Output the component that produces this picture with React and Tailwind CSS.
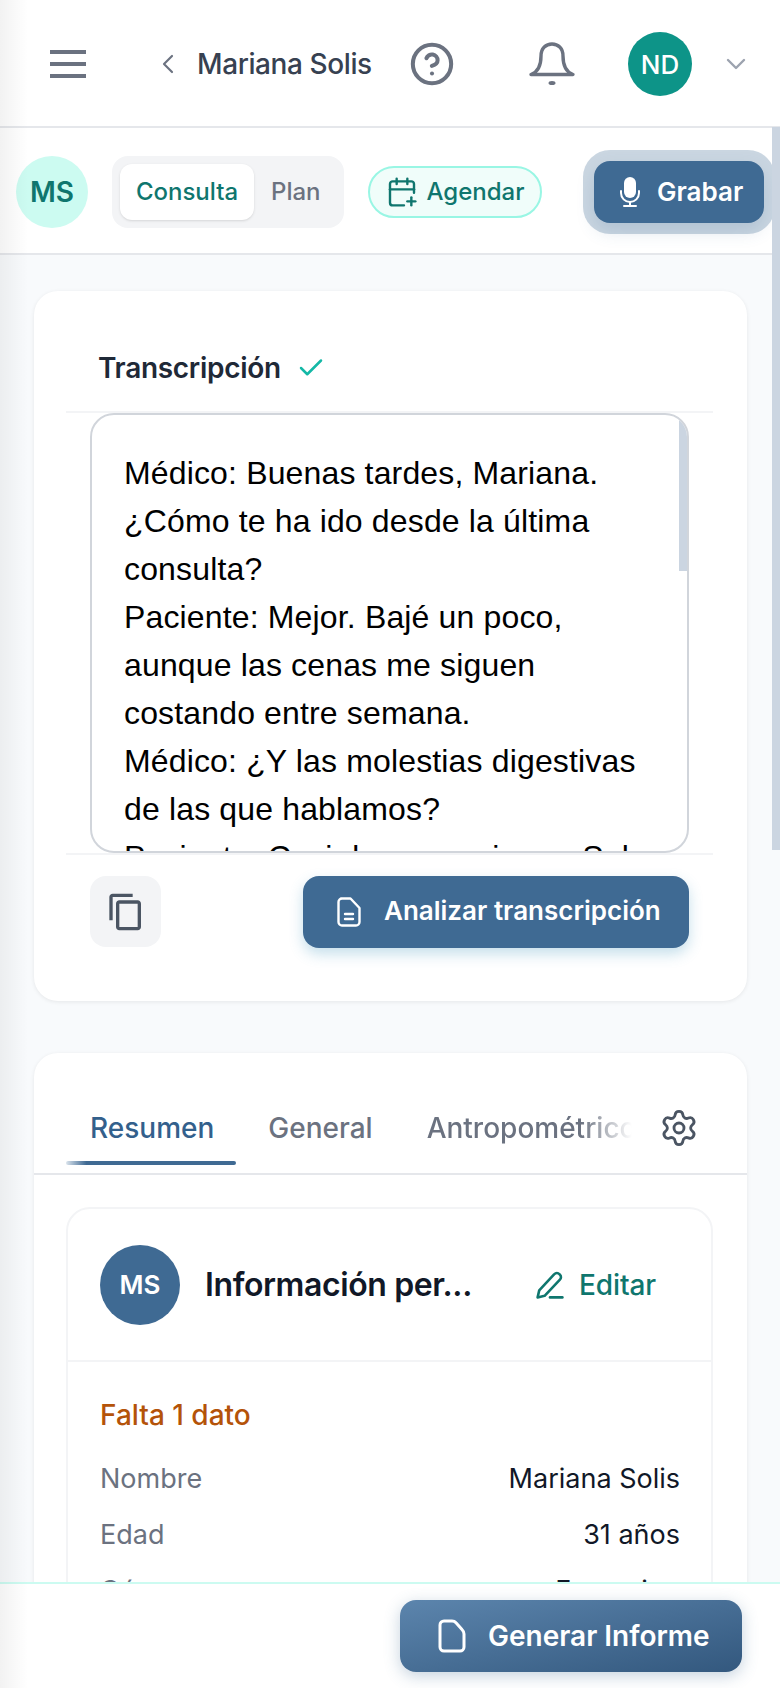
import { CalendarPlus, Check, ChevronDown, ChevronLeft, CircleHelp, Settings } from 'lucide-react';
import { MdOutlineContentCopy } from 'react-icons/md';

function MicIcon() {
  return (
    <svg viewBox="0 0 20 30" className="w-5 h-[30px]" fill="none" stroke="white" strokeWidth="2" strokeLinecap="round">
      <rect x="4" y="0" width="12" height="21" rx="6" fill="white" stroke="none" />
      <path d="M1 14v2a9 9 0 0 0 18 0v-2" />
      <path d="M10 25v4M4 29h12" />
    </svg>
  );
}

function DocIcon() {
  return (
    <svg viewBox="0 0 24 30" className="w-6 h-[30px]" fill="none" stroke="white" strokeWidth="2.4" strokeLinecap="round" strokeLinejoin="round">
      <path d="M4 1.5h9.5L22.5 11v14a3.5 3.5 0 0 1-3.5 3.5H5A3.5 3.5 0 0 1 1.5 25V5A3.5 3.5 0 0 1 5 1.5Z" />
      <path d="M8 17h8M8 22h8" />
    </svg>
  );
}

function BellIcon() {
  return (
    <svg viewBox="0 0 48 44" className="w-12 h-11 text-[#6b7280]" fill="none" stroke="currentColor" strokeWidth="3.4" strokeLinejoin="round">
      <path d="M3 32.5C10 30 13 24 13 14 13 6 18 2 24 2s11 4 11 12c0 10 3 16 10 18.5Z" />
      <ellipse cx="24" cy="41" rx="3.5" ry="2" fill="currentColor" stroke="none" />
    </svg>
  );
}

function BlankFileIcon() {
  return (
    <svg viewBox="0 0 28 34" className="w-7 h-[34px]" fill="none" stroke="white" strokeWidth="3" strokeLinejoin="round">
      <path d="M6 2h8q2.500 0 4 1.800l6 6.700q2 2 2 4.500V28a4 4 0 0 1-4 4H6a4 4 0 0 1-4-4V6a4 4 0 0 1 4-4Z" />
    </svg>
  );
}

function PenIcon() {
  return (
    <svg viewBox="0 0 26 26" className="w-7 h-7 text-[#0f766e]" fill="none" stroke="currentColor" strokeWidth="2.4" strokeLinecap="round" strokeLinejoin="round">
      <path d="M1.500 24.500l1.500-6.500L17 3a3.200 3.200 0 0 1 4.800 0l.4.400a3.200 3.200 0 0 1 0 4.600L8 23Z" />
      <path d="M13 24.500h11.500" />
    </svg>
  );
}

function Row({ label, value }) {
  return (
    <div className="flex justify-between items-center h-14 text-[27px]">
      <span className="text-[#6b7280]">{label}</span>
      <span className="text-[#111827]">{value}</span>
    </div>
  );
}

export default function App() {
  return (
    <div className="relative w-[780px] h-[1688px] overflow-hidden flex flex-col bg-[#f8fafc] font-[Inter,sans-serif]">
      <header className="h-[128px] shrink-0 bg-white border-b-2 border-[#e5e7eb] flex items-center pl-[50px] pt-[2px]">
        <div className="w-9 h-7 flex flex-col justify-between">
          <div className="h-1 bg-[#6b7280]" />
          <div className="h-1 bg-[#6b7280]" />
          <div className="h-1 bg-[#6b7280]" />
        </div>
        <ChevronLeft className="ml-[66px] w-8 h-8 text-[#6b7280]" strokeWidth={1.6} />
        <span className="ml-[13px] w-[175px] text-[28px] font-medium text-[#374151] tracking-[-0.4px] whitespace-nowrap">Mariana Solis</span>
        <CircleHelp className="ml-[37px] w-[46px] h-[46px] text-[#6b7280]" strokeWidth={2.1} />
        <div className="ml-[73px]"><BellIcon /></div>
        <div className="ml-[52px] w-16 h-16 rounded-full bg-[#0d9488] text-white text-[26px] font-medium flex items-center justify-center">ND</div>
        <ChevronDown className="ml-[28px] w-8 h-8 text-[#9ca3af]" strokeWidth={1.8} />
      </header>

      <div className="h-[127px] shrink-0 bg-white border-b-2 border-[#e5e7eb] flex items-center pl-4 pt-[2px]">
        <div className="w-[72px] h-[72px] rounded-full bg-[#ccfbf1] text-[#0f766e] text-[28px] font-semibold flex items-center justify-center">MS</div>
        <div className="ml-6 w-[232px] h-[72px] rounded-2xl bg-[#f3f4f6] flex items-center pl-2">
          <div className="w-[134px] h-14 rounded-xl bg-white text-[#0f766e] text-2xl font-medium flex items-center justify-center shadow-sm">Consulta</div>
          <span className="ml-[17px] text-2xl font-medium text-[#6b7280]">Plan</span>
        </div>
        <div className="ml-6 w-[174px] h-[52px] rounded-full border-2 border-[#99f6e4] bg-[#f0fdfa] text-[#0f766e] text-2xl font-medium flex items-center justify-center gap-[9px]">
          <CalendarPlus className="w-8 h-8" strokeWidth={1.8} />
          Agendar
        </div>
        <div className="ml-[52px] w-[170px] h-[62px] rounded-2xl bg-[#3f6a93] text-white text-[26px] font-semibold flex items-center pl-[26px] gap-[17px] shadow-[0_0_0_11px_rgba(63,106,147,0.28),0_8px_18px_rgba(63,106,147,0.18)]">
          <MicIcon />
          Grabar
        </div>
      </div>

      <main className="flex-1 min-h-0 overflow-hidden pl-[34px] pr-[33px] pt-9">
        <section className="h-[710px] rounded-3xl bg-white shadow-[0_1px_4px_rgba(0,0,0,0.08)] pt-[52px] pl-8 pr-[34px]">
          <div className="flex items-center pl-8 gap-[15px] h-[70px] border-b-2 border-[#f3f4f6]">
            <h2 className="-mt-[18px] text-[28px] font-semibold text-[#1f2937] tracking-[-0.3px]">Transcripción</h2>
            <Check className="-mt-[18px] w-[30px] h-[30px] text-[#14b8a6]" strokeWidth={2} />
          </div>
          <div className="relative mx-6 h-[440px] rounded-3xl border-2 border-[#d1d5db] overflow-hidden pl-[32px] pr-8 pt-[34px] text-[32px] leading-12 tracking-[0.15px] text-black font-['Liberation_Sans',sans-serif]">
            <p>Médico: Buenas tardes, Mariana. ¿Cómo te ha ido desde la última consulta?</p>
            <p>Paciente: Mejor. Bajé un poco, aunque las cenas me siguen costando entre semana.</p>
            <p>Médico: ¿Y las molestias digestivas de las que hablamos?</p>
            <p>Paciente: Casi desaparecieran. Solo</p>
            <div className="absolute top-0 right-0 w-2 h-[156px] bg-[#cbd5e1]" />
          </div>
          <div className="border-t-2 border-[#f3f4f6] pt-[21px] px-6 flex justify-between">
            <div className="w-[71px] h-[71px] rounded-2xl bg-[#f3f4f6] flex items-center justify-center">
              <MdOutlineContentCopy className="w-10 h-10 text-[#4b5563]" />
            </div>
            <div className="w-[386px] h-[72px] rounded-2xl bg-[#3f6a93] text-white text-[26px] font-semibold flex items-center pl-[34px] gap-[23px] shadow-[0_6px_14px_rgba(64,150,190,0.3)]">
              <DocIcon />
              <span className="-mt-[3px]">Analizar transcripción</span>
            </div>
          </div>
        </section>

        <section className="mt-[52px] rounded-3xl bg-white shadow-[0_1px_4px_rgba(0,0,0,0.08)]">
          <div className="relative h-[122px] border-b-2 border-[#e5e7eb] flex items-center pl-14 pt-[30px] text-[28px] font-medium text-[#6b7280]">
            <span className="text-[#33608c]">Resumen</span>
            <span className="ml-[54px]">General</span>
            <span className="ml-[54px] w-[205px] overflow-hidden whitespace-nowrap [mask-image:linear-gradient(to_right,black_75%,transparent)]">Antropométrico</span>
            <Settings className="ml-[27px] w-10 h-10 text-[#4b5563]" strokeWidth={1.7} />
            <div className="absolute left-8 bottom-2 w-[170px] h-1 rounded-full bg-gradient-to-r from-[#dbe4ec] to-[#3f6a93] to-[12%]" />
          </div>
          <div className="ml-8 mr-[34px] mt-8 rounded-3xl border-2 border-[#f3f4f6] bg-white">
            <div className="h-[153px] border-b-2 border-[#f3f4f6] flex items-center pl-8">
              <div className="w-20 h-20 rounded-full bg-[#3f6a93] text-white text-[26px] font-semibold flex items-center justify-center shrink-0">MS</div>
              <span className="ml-[25px] w-[267px] text-[32px] font-semibold text-[#111827] whitespace-nowrap tracking-[-0.4px]">Información per...</span>
              <div className="ml-[64px]"><PenIcon /></div>
              <span className="ml-[15px] text-[28px] font-medium text-[#0f766e] tracking-[-0.1px]">Editar</span>
            </div>
            <div className="pl-8 pr-[31px] pt-[32px]">
              <div className="text-[28px] font-medium text-[#b45309] mb-[15px]">Falta 1 dato</div>
              <Row label="Nombre" value="Mariana Solis" />
              <Row label="Edad" value="31 años" />
              <Row label="Género" value="Femenino" />
            </div>
          </div>
        </section>
      </main>

      <footer className="h-[106px] shrink-0 bg-white border-t-2 border-[#ccfbf1] flex justify-end items-start pt-[16px] pr-[38px]">
        <div className="w-[342px] h-[72px] rounded-2xl bg-gradient-to-br from-[#5c85ad] to-[#33587e] text-white text-[28px] font-semibold flex items-center pl-[38px] gap-[22px] shadow-[0_4px_16px_rgba(63,106,147,0.3)]">
          <BlankFileIcon />
          Generar Informe
        </div>
      </footer>

      <div className="absolute left-0 top-0 bottom-0 w-7 pointer-events-none bg-gradient-to-r from-black/5 to-transparent" />
      <div className="absolute right-0 top-[127px] w-2 h-[723px] bg-[#cbd5e1]" />
    </div>
  );
}
